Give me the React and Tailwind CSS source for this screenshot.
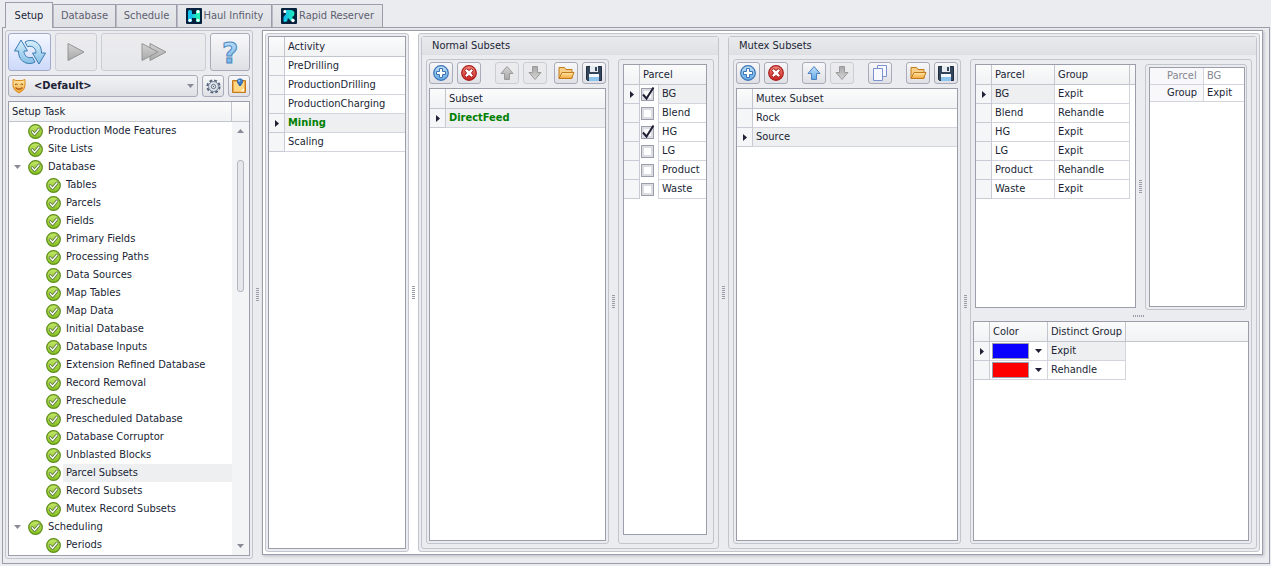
import React, { useState } from "react";

/* -------------------- DATA -------------------- */
const TABS = [
  { label: "Setup", width: "w-[48px]" },
  { label: "Database", width: "w-[63px]" },
  { label: "Schedule", width: "w-[61px]" },
  { label: "Haul Infinity", width: "w-[95px]", logo: "haul" },
  { label: "Rapid Reserver", width: "w-[111px]", logo: "rapid" },
];

const TASKS = [
  { label: "Production Mode Features" },
  { label: "Site Lists" },
  { label: "Database", open: true },
  { label: "Tables", child: true },
  { label: "Parcels", child: true },
  { label: "Fields", child: true },
  { label: "Primary Fields", child: true },
  { label: "Processing Paths", child: true },
  { label: "Data Sources", child: true },
  { label: "Map Tables", child: true },
  { label: "Map Data", child: true },
  { label: "Initial Database", child: true },
  { label: "Database Inputs", child: true },
  { label: "Extension Refined Database", child: true },
  { label: "Record Removal", child: true },
  { label: "Preschedule", child: true },
  { label: "Prescheduled Database", child: true },
  { label: "Database Corruptor", child: true },
  { label: "Unblasted Blocks", child: true },
  { label: "Parcel Subsets", child: true },
  { label: "Record Subsets", child: true },
  { label: "Mutex Record Subsets", child: true },
  { label: "Scheduling", open: true },
  { label: "Periods", child: true },
];

const ACTIVITIES = ["PreDrilling", "ProductionDrilling", "ProductionCharging", "Mining", "Scaling"];

const PARCELS = [
  { name: "BG", group: "Expit", checked: true },
  { name: "Blend", group: "Rehandle", checked: false },
  { name: "HG", group: "Expit", checked: true },
  { name: "LG", group: "Expit", checked: false },
  { name: "Product", group: "Rehandle", checked: false },
  { name: "Waste", group: "Expit", checked: false },
];

const COLORS = [
  { group: "Expit", swatch: "bg-[#0a00ff]" },
  { group: "Rehandle", swatch: "bg-[#ff0000]" },
];

/* -------------------- ICONS -------------------- */
const Gradients = () => (
  <svg width="0" height="0" className="absolute" aria-hidden="true">
    <defs>
      <linearGradient id="blue" x1="0" y1="0" x2="0" y2="1">
        <stop offset="0" stopColor="#c4e2fa" />
        <stop offset="1" stopColor="#5fa8e4" />
      </linearGradient>
      <linearGradient id="sky" x1="0" y1="0" x2="0" y2="1">
        <stop offset="0" stopColor="#d6effb" />
        <stop offset="1" stopColor="#86bfe6" />
      </linearGradient>
      <linearGradient id="red" x1="0" y1="0" x2="0" y2="1">
        <stop offset="0" stopColor="#f28a80" />
        <stop offset="1" stopColor="#c8201c" />
      </linearGradient>
      <linearGradient id="green" x1="0" y1="0" x2="0" y2="1">
        <stop offset="0" stopColor="#c5e86a" />
        <stop offset="1" stopColor="#86bf22" />
      </linearGradient>
      <linearGradient id="grey" x1="0" y1="0" x2="0" y2="1">
        <stop offset="0" stopColor="#d4d4d4" />
        <stop offset="1" stopColor="#a8a8a8" />
      </linearGradient>
      <linearGradient id="gold" x1="0" y1="0" x2="0" y2="1">
        <stop offset="0" stopColor="#ffe9a8" />
        <stop offset="1" stopColor="#f3a63a" />
      </linearGradient>
      <linearGradient id="teal" x1="0" y1="0" x2="1" y2="0">
        <stop offset="0" stopColor="#12b4f5" />
        <stop offset="1" stopColor="#22f0b4" />
      </linearGradient>
    </defs>
  </svg>
);

const Logo = ({ kind }) => (
  <svg width="16" height="16" viewBox="0 0 16 16" className="shrink-0" aria-hidden="true">
    <rect width="16" height="16" rx="1" fill="#04203c" />
    {kind === "haul" ? (
      <g>
        <rect x="2" y="2" width="4" height="12" rx="1.500" fill="#14c4ee" />
        <rect x="10" y="2" width="4" height="12" rx="1.500" fill="#22f0b4" />
        <rect x="4" y="6" width="8" height="4" fill="url(#teal)" />
        <circle cx="4" cy="12.300" r="1.600" fill="#fff" />
        <circle cx="12" cy="3.700" r="1.600" fill="#fff" />
        <circle cx="12" cy="12.300" r="1.600" fill="#e4fff8" />
      </g>
    ) : (
      <g>
        <path d="M3 2H10Q13.500 2.500 13.500 5.500Q13.500 8 11 9L13.500 13H10L7 10L6 13.500H2.500V9L5 6Z" fill="url(#teal)" />
        <circle cx="3.800" cy="3.500" r="1.500" fill="#fff" />
        <circle cx="12" cy="12.500" r="1.700" fill="#fff" />
        <circle cx="4" cy="12.500" r="1.200" fill="#14d8e8" />
      </g>
    )}
  </svg>
);

const RefreshIcon = () => (
  <svg width="32" height="26" viewBox="0 0 32 25" fill="url(#sky)" stroke="#3b7cb0" strokeLinejoin="round" aria-hidden="true">
    <path d="M25 24.500L18.500 13.500H22C22 9.500 19.500 7 16 6.700L13.500 7.200L11 2.500C13 1 17 0.500 20 1.500C25 3.500 27.500 7.500 27.500 13.500H31.500Z" />
    <path d="M7 0.500L13.500 11.500H10C10 15.500 12.500 18 16 18.300L18.500 17.800L21 22.500C19 24 15 24.500 12 23.500C7 21.500 4.500 17.500 4.500 11.500H0.500Z" />
  </svg>
);

const PlayIcon = ({ double }) => (
  <svg width={double ? 26 : 18} height="20" viewBox={double ? "0 0 26 20" : "0 0 18 20"} fill="url(#grey)" stroke="#949494" strokeLinejoin="miter" aria-hidden="true">
    {double && <path d="M9 1.500L25 10L9 18.500Z" />}
    <path d="M1 1.500L17 10L1 18.500Z" />
  </svg>
);

const HelpIcon = () => (
  <svg width="24" height="36" viewBox="0 0 24 36" aria-hidden="true">
    <text x="12" y="29" textAnchor="middle" fontFamily="DejaVu Sans, sans-serif" fontWeight="700" fontSize="28" fill="url(#blue)" stroke="#4d86bd">?</text>
  </svg>
);

const MaskIcon = () => (
  <svg width="14" height="16" viewBox="0 0 14 16" aria-hidden="true">
    <path d="M1 1.500Q4 3 7 2.500Q10 3 13 1.500V8Q13 12 7 15Q1 12 1 8Z" fill="url(#gold)" stroke="#d98a1c" />
    <path d="M3 6.500Q4.200 5.500 5.500 6.500M8.500 6.500Q9.800 5.500 11 6.500" fill="none" stroke="#8a4a08" />
    <path d="M3.500 9.500Q7 13 10.500 9.500" fill="none" stroke="#a85a10" strokeWidth="1.200" />
  </svg>
);

const GearIcon = () => (
  <svg width="15" height="15" viewBox="0 0 16 16" aria-hidden="true">
    <circle cx="8" cy="8" r="6.500" fill="none" stroke="#56667c" strokeWidth="2.200" strokeDasharray="3 2.100" />
    <circle cx="8" cy="8" r="5.300" fill="#dfe4ec" stroke="#6c7b90" />
    <circle cx="8" cy="8" r="2.300" fill="#f4f5f8" stroke="#56667c" />
    <circle cx="8" cy="8" r="0.800" fill="#56667c" />
  </svg>
);

const NoteIcon = () => (
  <svg width="16" height="16" viewBox="0 0 16 16" aria-hidden="true">
    <path d="M1.500 2.500H14.500V14.500H1.500Z" fill="#eda94c" stroke="#c27a1c" />
    <path d="M3 4H13V13.500H3Z" fill="#ffd883" />
    <path d="M9.500 13.500L13 10V13.500Z" fill="#fff6dc" />
    <path d="M7 5H11L10 8H8Z" fill="#2f6cb0" />
    <circle cx="9" cy="3.500" r="2.800" fill="#3d7fc8" stroke="#2a5f9e" strokeWidth="0.600" />
    <circle cx="8.300" cy="2.700" r="1" fill="#a9d0f5" />
  </svg>
);

const TaskIcon = () => (
  <svg width="15" height="15" viewBox="0 0 15 15" className="shrink-0" aria-hidden="true">
    <circle cx="7.500" cy="7.500" r="6.800" fill="url(#green)" stroke="#5a8c14" strokeWidth="1.200" />
    <path d="M4.200 7.800L6.600 10.200L11 5" fill="none" stroke="#55703a" strokeWidth="3" strokeLinejoin="round" strokeLinecap="round" />
    <path d="M4.200 7.800L6.600 10.200L11 5" fill="none" stroke="#f4f8ee" strokeWidth="1.500" strokeLinejoin="round" strokeLinecap="round" />
  </svg>
);

const AddIcon = () => (
  <svg width="16" height="16" viewBox="0 0 16 16" aria-hidden="true">
    <circle cx="8" cy="8" r="7.300" fill="url(#blue)" stroke="#3a72b4" strokeWidth="1.200" />
    <path d="M6.500 3.500H9.500V6.500H12.500V9.500H9.500V12.500H6.500V9.500H3.500V6.500H6.500Z" fill="#fff" stroke="#3a72b4" />
  </svg>
);

const DeleteIcon = () => (
  <svg width="16" height="16" viewBox="0 0 16 16" aria-hidden="true">
    <circle cx="8" cy="8" r="7.300" fill="url(#red)" stroke="#a81e1c" strokeWidth="1.200" />
    <path d="M5.500 3.700L8 5.500L10.500 3.700L12.300 5.500L10.500 8L12.300 10.500L10.500 12.300L8 10.500L5.500 12.300L3.700 10.500L5.500 8L3.700 5.500Z" fill="#fff" stroke="#a81e1c" />
  </svg>
);

const ArrowIcon = ({ down, active }) => (
  <svg width="14" height="16" viewBox="0 0 14 16" aria-hidden="true" className={down ? "rotate-180" : ""}>
    <path d="M7 1.500L13 8.500H9.500V14.500H4.500V8.500H1Z" fill={active ? "url(#blue)" : "url(#grey)"} stroke={active ? "#4a7fc0" : "#9a9a9a"} strokeLinejoin="round" />
  </svg>
);

const CopyIcon = () => (
  <svg width="14" height="16" viewBox="0 0 14 16" aria-hidden="true" fill="#f7f9ff" stroke="#7c92cc">
    <path d="M4.500 0.500H13.500V11.500H4.500Z" />
    <path d="M0.500 3.500H9.500V15.500H0.500Z" />
  </svg>
);

const FolderIcon = () => (
  <svg width="17" height="14" viewBox="0 0 17 14" aria-hidden="true" strokeLinejoin="round">
    <path d="M1 12.500V1.500H6.500L8 3.500H14V12.500Z" fill="#f7cf86" stroke="#c27a1c" />
    <path d="M1 12.500L4 6.500H16L13.500 12.500Z" fill="url(#gold)" stroke="#c27a1c" />
  </svg>
);

const SaveIcon = () => (
  <svg width="16" height="15" viewBox="0 0 16 15" aria-hidden="true">
    <path d="M0.500 0.500H15.500V14.500H1.500L0.500 13.500Z" fill="#34465c" stroke="#1f2d40" />
    <rect x="4" y="0" width="8" height="6" fill="#e6ebf2" />
    <rect x="9" y="1" width="2" height="4" fill="#34465c" />
    <rect x="3" y="8" width="10" height="7" fill="#f4f7fb" />
    <rect x="3" y="11" width="10" height="4" fill="#8cc4ee" />
  </svg>
);

const Triangle = ({ className = "" }) => (
  <svg width="7" height="4" viewBox="0 0 7 4" className={className} aria-hidden="true">
    <path d="M0 0H7L3.500 4Z" fill="currentColor" />
  </svg>
);

const RowMarker = () => (
  <svg width="4" height="7" viewBox="0 0 4 7" className="mx-auto" aria-label="Current row">
    <path d="M0 0L4 3.500L0 7Z" fill="#201f35" />
  </svg>
);

/* -------------------- SHARED PARTS -------------------- */
const Grip = ({ horizontal }) => (
  <div className={`flex shrink-0 items-center justify-center ${horizontal ? "h-[11px] w-full pl-[56px]" : "w-[9px]"}`}>
    <div
      className={
        horizontal
          ? "h-[2px] w-[12px] bg-[repeating-linear-gradient(90deg,#9b9ca8_0_1px,transparent_1px_2px)]"
          : "h-[14px] w-[3px] bg-[repeating-linear-gradient(#9b9ca8_0_1px,transparent_1px_2px)]"
      }
    />
  </div>
);

const Panel = ({ className = "", children }) => (
  <div className={`rounded-[3px] border border-[#c3c5cd] bg-[#ebecef] ${className}`}>{children}</div>
);

const ToolButton = ({ label, disabled, className = "", children }) => (
  <button
    type="button"
    aria-label={label}
    disabled={disabled}
    className={`flex shrink-0 items-center justify-center rounded-[3px] border bg-linear-to-b ${
      disabled ? "border-[#cccdd4] from-[#ececef] to-[#e6e7ea]" : "border-[#a9abb8] from-[#f8f8fa] to-[#dfe0e5]"
    } ${className}`}
  >
    {children}
  </button>
);

const GroupBox = ({ title, className = "", children }) => (
  <section className={`flex flex-col rounded-[3px] border border-[#c3c5cd] ${className}`}>
    <h2 className="h-[18px] border-b border-[#dddee2] bg-linear-to-b from-[#e9eaed] to-[#e0e1e5] pl-[10px] leading-[18px]">{title}</h2>
    <div className="flex flex-1 p-1">{children}</div>
  </section>
);

const GridBox = ({ className = "", children }) => (
  <div className={`overflow-hidden border border-[#9b9dab] bg-white ${className}`}>{children}</div>
);

const Th = ({ className = "", children, ...rest }) => (
  <th {...rest} className={`h-[20px] border-b border-[#c3c5cd] bg-linear-to-b from-[#fbfbfc] to-[#f1f2f3] p-0 pl-[3px] text-left font-normal ${className}`}>
    {children}
  </th>
);

const Td = ({ className = "", children }) => (
  <td className={`h-[19px] border-b border-[#d3d4dc] p-0 pl-[3px] ${className}`}>{children}</td>
);

const Marker = ({ on }) => (
  <td className="h-[19px] w-[16px] border-r border-b border-[#c9cad3] bg-[#f5f6f7] p-0">{on && <RowMarker />}</td>
);

const MarkerHead = () => <Th className="w-[16px] border-r" />;

const NameGrid = ({ title, rows, selected, onSelect, bold }) => (
  <table className="w-full table-fixed border-separate border-spacing-0">
    <thead>
      <tr>
        <MarkerHead />
        <Th>{title}</Th>
      </tr>
    </thead>
    <tbody>
      {rows.map((name) => {
        const on = name === selected;
        return (
          <tr key={name} onClick={() => onSelect && onSelect(name)}>
            <Marker on={on} />
            <Td className={on ? (bold ? "bg-[#edeff0] font-bold text-[#008000]" : "bg-[#edeff0]") : ""}>{name}</Td>
          </tr>
        );
      })}
    </tbody>
  </table>
);

/* -------------------- SIDEBAR -------------------- */
const Sidebar = () => {
  const [task, setTask] = useState("Parcel Subsets");

  return (
    <Panel className="flex w-[248px] shrink-0 flex-col gap-1 p-[2px]">
      <div className="flex h-[38px] gap-1">
        <button
          type="button"
          aria-label="Refresh"
          className="flex w-[43px] items-center justify-center rounded-[3px] border border-[#a3abc8] bg-linear-to-b from-[#f4f7ff] to-[#cdd9fa]"
        >
          <RefreshIcon />
        </button>
        <ToolButton label="Run" disabled className="w-[42px]">
          <PlayIcon />
        </ToolButton>
        <ToolButton label="Run all" disabled className="w-[105px]">
          <PlayIcon double />
        </ToolButton>
        <ToolButton label="Help" className="w-[40px]">
          <HelpIcon />
        </ToolButton>
      </div>

      <div className="flex h-[22px] gap-1">
        <div className="relative flex-1">
          <select
            aria-label="Profile"
            className="h-full w-full appearance-none rounded-[3px] border border-[#a9abb8] bg-linear-to-b from-[#f3f3f6] to-[#dfe0e5] pl-[25px] font-bold"
          >
            <option>&lt;Default&gt;</option>
          </select>
          <span className="pointer-events-none absolute top-[3px] left-[4px]">
            <MaskIcon />
          </span>
          <Triangle className="pointer-events-none absolute top-[9px] right-[4px] text-[#8a8b98]" />
        </div>
        <ToolButton label="Settings" className="w-[22px]">
          <GearIcon />
        </ToolButton>
        <ToolButton label="Notes" className="w-[22px]">
          <NoteIcon />
        </ToolButton>
      </div>

      <div className="flex flex-1 flex-col border border-[#9b9dab] bg-white">
        <div className="flex h-[20px] border-b border-[#c3c5cd] bg-linear-to-b from-[#fbfbfc] to-[#f1f2f3] leading-[19px]">
          <span className="flex-1 border-r border-[#c3c5cd] pl-[3px]">Setup Task</span>
          <span className="w-[17px]" />
        </div>
        <div className="flex flex-1">
          <ul className="flex-1">
            {TASKS.map((t) => (
              <li key={t.label} className={`flex h-[18px] items-center ${t.child ? "pl-[37px]" : ""}`}>
                {!t.child && (
                  <span className="flex w-[19px] shrink-0 items-center pl-[5px]">
                    {t.open && (
                      <button type="button" aria-label={`Collapse ${t.label}`}>
                        <Triangle className="text-[#8a8b98]" />
                      </button>
                    )}
                  </span>
                )}
                <TaskIcon />
                <button
                  type="button"
                  onClick={() => setTask(t.label)}
                  className={`ml-[2px] h-full flex-1 pl-[3px] text-left whitespace-nowrap ${t.label === task ? "bg-[#edeff0]" : ""}`}
                >
                  {t.label}
                </button>
              </li>
            ))}
          </ul>
          <div className="flex w-[17px] flex-col items-center bg-[#f3f4f5] pt-[7px] pb-[7px] text-[#8a8b98]">
            <Triangle className="rotate-180" />
            <div className="mt-[27px] h-[132px] w-[7px] rounded-[3px] border border-[#b4b6c2] bg-[#e6e7eb]" />
            <Triangle className="mt-auto" />
          </div>
        </div>
      </div>
    </Panel>
  );
};

/* -------------------- NORMAL SUBSETS -------------------- */
const NormalSubsets = () => {
  const [parcels, setParcels] = useState(PARCELS);

  const toggle = (name) => {
    setParcels((prev) => prev.map((p) => (p.name === name ? { ...p, checked: !p.checked } : p)));
  };

  return (
    <GroupBox title="Normal Subsets" className="w-[298px] shrink-0">
      <Panel className="flex w-[183px] flex-col gap-1 p-[2px]">
        <div className="flex h-[22px]">
          <ToolButton label="Add subset" className="w-6"><AddIcon /></ToolButton>
          <ToolButton label="Delete subset" className="ml-1 w-6"><DeleteIcon /></ToolButton>
          <ToolButton label="Move up" disabled className="ml-[14px] w-6"><ArrowIcon /></ToolButton>
          <ToolButton label="Move down" disabled className="ml-1 w-6"><ArrowIcon down /></ToolButton>
          <ToolButton label="Open" className="ml-auto w-6"><FolderIcon /></ToolButton>
          <ToolButton label="Save" className="ml-1 w-6"><SaveIcon /></ToolButton>
        </div>
        <GridBox className="flex-1">
          <NameGrid title="Subset" rows={["DirectFeed"]} selected="DirectFeed" bold />
        </GridBox>
      </Panel>
      <Grip />
      <Panel className="flex flex-1 pt-1 pr-[6px] pb-2 pl-1">
        <GridBox className="flex-1">
          <table className="w-full table-fixed border-separate border-spacing-0">
            <colgroup>
              <col className="w-[16px]" />
              <col className="w-[19px]" />
              <col />
            </colgroup>
            <thead>
              <tr>
                <MarkerHead />
                <Th colSpan={2}>Parcel</Th>
              </tr>
            </thead>
            <tbody>
              {parcels.map((p, i) => (
                <tr key={p.name}>
                  <Marker on={i === 0} />
                  <td className="h-[19px] border-r border-[#d3d4dc] p-0 pl-px">
                    <span className="relative block h-[13px] w-[13px]">
                      <input
                        id={`parcel-${p.name}`}
                        type="checkbox"
                        checked={p.checked}
                        onChange={() => toggle(p.name)}
                        className="block h-[13px] w-[13px] appearance-none border border-[#9b9dab] bg-white shadow-[inset_0_0_0_2px_#dcdde3]"
                      />
                      {p.checked && (
                        <svg width="14" height="14" viewBox="0 0 14 14" className="pointer-events-none absolute -top-px left-0" aria-hidden="true">
                          <path d="M2 7.500L5.500 11.500L12.500 0.500" fill="none" stroke="#201f35" strokeWidth="2" />
                        </svg>
                      )}
                    </span>
                  </td>
                  <Td className={i === 0 ? "bg-[#edeff0]" : ""}>
                    <label htmlFor={`parcel-${p.name}`}>{p.name}</label>
                  </Td>
                </tr>
              ))}
            </tbody>
          </table>
        </GridBox>
      </Panel>
    </GroupBox>
  );
};

/* -------------------- MUTEX SUBSETS -------------------- */
const MutexSubsets = () => {
  const [subset, setSubset] = useState("Source");

  return (
    <GroupBox title="Mutex Subsets" className="flex-1">
      <Panel className="flex w-[228px] shrink-0 flex-col gap-1 p-[2px]">
        <div className="flex h-[22px]">
          <ToolButton label="Add mutex subset" className="w-6"><AddIcon /></ToolButton>
          <ToolButton label="Delete mutex subset" className="ml-1 w-6"><DeleteIcon /></ToolButton>
          <ToolButton label="Move up" className="ml-[14px] w-6"><ArrowIcon active /></ToolButton>
          <ToolButton label="Move down" disabled className="ml-1 w-6"><ArrowIcon down /></ToolButton>
          <ToolButton label="Copy" className="ml-[14px] w-6"><CopyIcon /></ToolButton>
          <ToolButton label="Open" className="ml-auto w-6"><FolderIcon /></ToolButton>
          <ToolButton label="Save" className="ml-1 w-6"><SaveIcon /></ToolButton>
        </div>
        <GridBox className="flex-1">
          <NameGrid title="Mutex Subset" rows={["Rock", "Source"]} selected={subset} onSelect={setSubset} />
        </GridBox>
      </Panel>
      <Grip />
      <Panel className="flex flex-1 flex-col p-[2px]">
        <div className="flex min-h-[248px] px-[2px] pt-[2px]">
          <GridBox className="mb-[2px] flex-1">
            <table className="w-full table-fixed border-separate border-spacing-0">
              <thead>
                <tr>
                  <MarkerHead />
                  <Th className="w-[63px] border-r">Parcel</Th>
                  <Th className="border-r">Group</Th>
                  <Th className="w-[5px]" />
                </tr>
              </thead>
              <tbody>
                {PARCELS.map((p, i) => (
                  <tr key={p.name}>
                    <Marker on={i === 0} />
                    <Td className={i === 0 ? "border-r bg-[#edeff0]" : "border-r"}>{p.name}</Td>
                    <Td className="border-r">{p.group}</Td>
                    <td />
                  </tr>
                ))}
              </tbody>
            </table>
          </GridBox>
          <Grip />
          <Panel className="flex w-[102px] py-[2px] pr-px pl-[3px]">
            <GridBox className="flex-1">
              <table className="w-full table-fixed border-separate border-spacing-0">
                <tbody>
                  <tr className="text-[#85868f]">
                    <th className="h-[17px] w-[54px] border-r border-b border-[#d3d4dc] bg-[#f8f8fa] p-0 pl-[17px] text-left font-normal">Parcel</th>
                    <td className="h-[17px] border-b border-[#d3d4dc] p-0 pl-[3px]">BG</td>
                  </tr>
                  <tr>
                    <th className="h-[17px] border-r border-b border-[#d3d4dc] bg-[#f8f8fa] p-0 pl-[17px] text-left font-normal">Group</th>
                    <td className="h-[17px] border-b border-[#d3d4dc] p-0 pl-[3px]">Expit</td>
                  </tr>
                </tbody>
              </table>
            </GridBox>
          </Panel>
        </div>
        <Grip horizontal />
        <GridBox className="flex-1">
          <table className="w-full table-fixed border-separate border-spacing-0">
            <thead>
              <tr>
                <MarkerHead />
                <Th className="w-[58px] border-r">Color</Th>
                <Th className="w-[78px] border-r whitespace-nowrap">Distinct Group</Th>
                <Th />
              </tr>
            </thead>
            <tbody>
              {COLORS.map((c, i) => (
                <tr key={c.group}>
                  <Marker on={i === 0} />
                  <td className="h-[19px] border-r border-b border-[#d3d4dc] p-0">
                    <button type="button" aria-label={`${c.group} color`} className="flex w-full items-center pl-[2px]">
                      <span className={`block h-[16px] w-[37px] border border-[#9b9dab] ${c.swatch}`} />
                      <Triangle className="ml-[6px]" />
                    </button>
                  </td>
                  <Td className={i === 0 ? "border-r bg-[#edeff0]" : "border-r"}>{c.group}</Td>
                  <td />
                </tr>
              ))}
            </tbody>
          </table>
        </GridBox>
      </Panel>
    </GroupBox>
  );
};

/* -------------------- APP -------------------- */
const App = () => {
  const [tab, setTab] = useState("Setup");
  const [activity, setActivity] = useState("Mining");

  return (
    <div className="flex min-h-screen flex-col bg-[#ebecef] pt-[2px] pr-px pb-[2px] pl-[2px] font-['DejaVu_Sans_Condensed','DejaVu_Sans',sans-serif] text-[11px] leading-[16px] text-[#201f35]">
      <Gradients />

      <nav className="flex h-[25px] items-end pl-[3px]">
        {TABS.map((t) => (
          <button
            key={t.label}
            type="button"
            onClick={() => setTab(t.label)}
            className={`flex items-center justify-center gap-[2px] border border-b-0 border-[#9b9dab] whitespace-nowrap ${t.width} ${
              t.label === tab ? "relative -mb-px h-[26px] bg-[#ebecef]" : "h-[23px] border-l-[#b8bac5] bg-linear-to-b from-[#e8e9ec] to-[#dfe0e4] text-[#5d5e70]"
            }`}
          >
            {t.logo && <Logo kind={t.logo} />}
            {t.label}
          </button>
        ))}
      </nav>

      <main className="flex flex-1 border border-[#9b9dab] pt-[2px] pr-[6px] pb-1 pl-[2px]">
        <Sidebar />
        <Grip />
        <div className="mb-1 flex flex-1 border border-[#9b9dab] bg-white p-[2px] shadow-[1px_1px_3px_#b9bac4]">
          <Panel className="flex w-[144px] shrink-0 p-[2px]">
            <GridBox className="flex-1">
              <NameGrid title="Activity" rows={ACTIVITIES} selected={activity} onSelect={setActivity} bold />
            </GridBox>
          </Panel>
          <Grip />
          <Panel className="flex flex-1 p-[2px]">
            <NormalSubsets />
            <Grip />
            <MutexSubsets />
          </Panel>
        </div>
      </main>
    </div>
  );
};

export default App;
